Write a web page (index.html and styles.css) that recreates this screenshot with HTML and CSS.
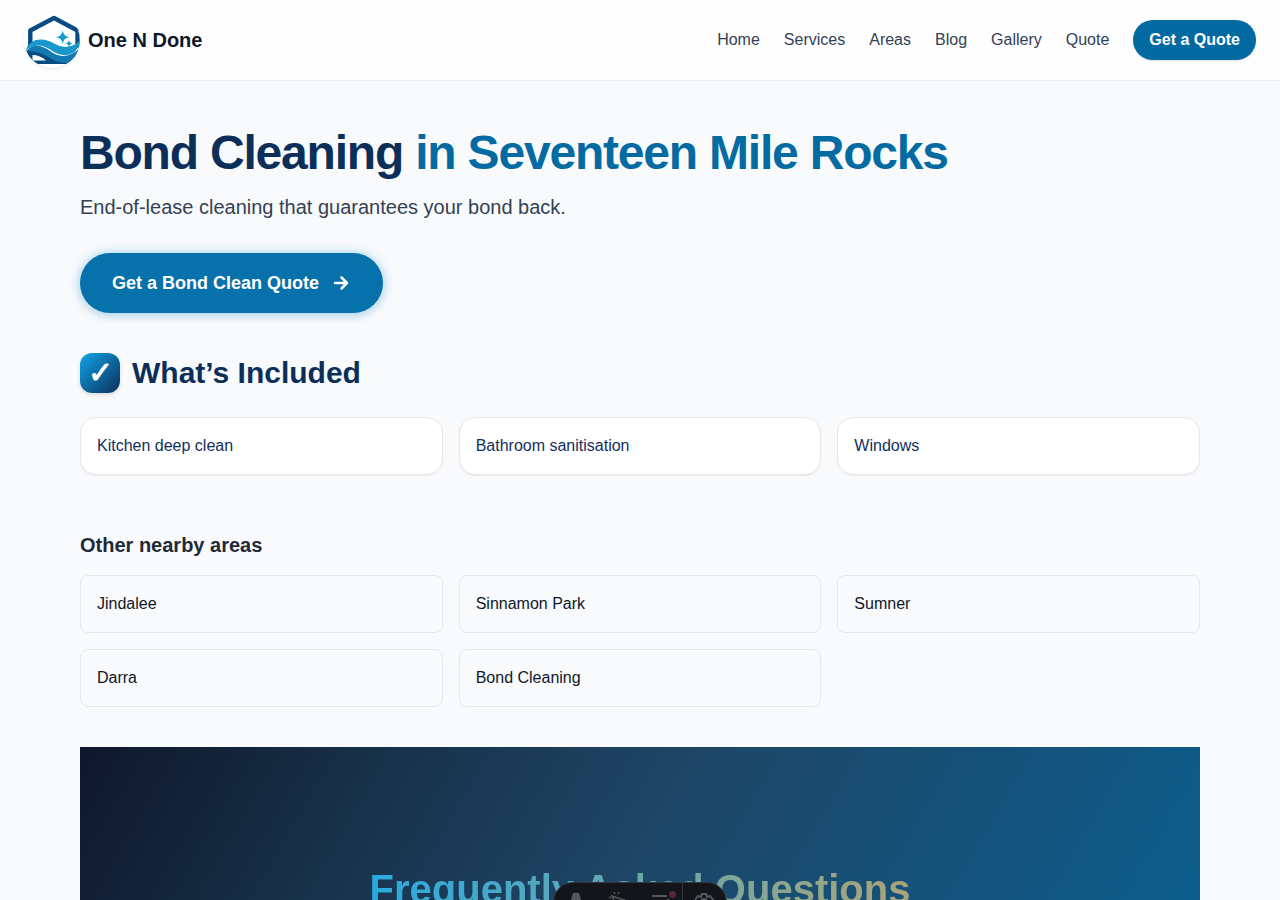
FILE: index.html
```html
<!DOCTYPE html>
<html lang="en">
<head>
<meta charset="utf-8">
<meta name="viewport" content="width=device-width, initial-scale=1">
<title>Bond Cleaning in Seventeen Mile Rocks | One N Done</title>
<link rel="stylesheet" href="styles.css">
</head>
<body>
<header class="site-header">
  <a class="brand" href="#">
    <svg class="brand-logo" viewBox="0 0 56 56" aria-hidden="true">
      <circle cx="28" cy="28" r="28" fill="#fff"/>
      <path d="M6.300 34V18.500L30 6 53.500 18.500V36" fill="none" stroke="#074b82" stroke-width="4.400" stroke-linejoin="round"/>
      <path d="M2 38Q7 34 14 34Q22 36 29 42Q41 50 56 37Q54 47 47 52H11Q5 47 2 38Z" fill="#074b82"/>
      <path d="M8.500 43Q16 43 22 48.500H8.500Z" fill="#fff"/>
      <path d="M2 38Q8 33 16 34Q23 36 29 41Q42 49 56 36Q54 45 48 50Q36 53 26 46Q16 39 2 39Z" fill="#1478b2"/>
      <path d="M2 38Q10 31 17 33Q23 35 29 40Q42 48 56 35" fill="none" stroke="#fff" stroke-width="1.200"/>
      <path d="M2 38Q5 28 16 27.500Q23 27 31 32Q43 39 56 29Q55 37 49 41Q39 46 29 39.500Q18 32 11 34Q6 35 2 38Z" fill="#1997cb"/>
      <path d="M38.700 18.500Q39.500 24 45 25.300Q39.500 26 38.700 32Q38 26 32 25.300Q38 24 38.700 18.500ZM45 28Q45.500 31 48.500 31.500Q45.500 32 45 35Q44.500 32 41.500 31.500Q44.500 31 45 28Z" fill="#159bd2"/>
    </svg>
    <span>One N Done</span>
  </a>
  <nav class="nav" aria-label="Main">
    <a href="#">Home</a>
    <a href="#">Services</a>
    <a href="#">Areas</a>
    <a href="#">Blog</a>
    <a href="#">Gallery</a>
    <a href="#">Quote</a>
    <a class="nav-cta" href="#">Get a Quote</a>
  </nav>
</header>
<main class="content">
  <h1 class="title">Bond Cleaning <span class="title-place">in Seventeen Mile Rocks</span></h1>
  <p class="lead">End-of-lease cleaning that guarantees your bond back.</p>
  <a class="cta" href="#">Get a Bond Clean Quote
    <svg class="cta-arrow" viewBox="0 0 20 20" aria-hidden="true"><path d="M4 10H16M10.500 4.500 16 10 10.500 15.500" fill="none" stroke="currentColor" stroke-width="2.500" stroke-linecap="round" stroke-linejoin="round"/></svg>
  </a>
  <h2 class="included-title"><span class="tick" aria-hidden="true">✓</span>What’s Included</h2>
  <ul class="grid">
    <li class="card included">Kitchen deep clean</li>
    <li class="card included">Bathroom sanitisation</li>
    <li class="card included">Windows</li>
  </ul>
  <h2 class="nearby-title">Other nearby areas</h2>
  <div class="grid">
    <a class="card area" href="#">Jindalee</a>
    <a class="card area" href="#">Sinnamon Park</a>
    <a class="card area" href="#">Sumner</a>
    <a class="card area" href="#">Darra</a>
    <a class="card area" href="#">Bond Cleaning</a>
  </div>
  <section class="faq">
    <h2 class="faq-title">Frequently Asked Questions</h2>
  </section>
</main>
<div class="toolbar" role="toolbar" aria-label="Developer tools">
  <button class="tool" aria-label="Menu"><svg viewBox="0 0 20 20"><path d="M8 1H14L19 17 14 15 13 12H9L8 15 3 17Z" fill="currentColor"/></svg></button>
  <button class="tool" aria-label="Inspect"><svg viewBox="0 0 20 20" fill="none" stroke="currentColor" stroke-width="1.500"><path d="M4 4 19 9 13 12 11 18ZM3 6 1 5M7 2 6 0M10 2 11 0"/></svg></button>
  <button class="tool" aria-label="Audit"><svg viewBox="0 0 20 20" fill="none" stroke="currentColor" stroke-width="2"><path d="M1 4H16M1 10H10M13 12 18 7"/></svg><span class="alert-dot"></span></button>
  <button class="tool tool-settings" aria-label="Settings"><svg viewBox="0 0 20 20" fill="none" stroke="currentColor" stroke-width="2"><path d="M7 2H11L12 5 15 4 18 8 15 11 16 15 12 15 11 18H7L6 15 2 15 3 11 0 8 3 4 6 5Z"/><circle cx="9" cy="10" r="3"/></svg></button>
</div>
</body>
</html>
```
FILE: styles.css
```css
* { box-sizing: border-box; }
body {
  margin: 0;
  background: #f9fafc;
  color: #0f172a;
  font: 16px/24px "Liberation Sans", Arial, sans-serif;
}
a { color: inherit; text-decoration: none; }
h1, h2, p, ul { margin: 0; padding: 0; }
.site-header {
  display: flex;
  align-items: center;
  justify-content: space-between;
  padding: 12px 24px;
  background: #fefefe;
  border-bottom: 1px solid #edf0f5;
}
.brand {
  display: flex;
  align-items: center;
  gap: 8px;
  font-size: 20px;
  line-height: 28px;
  font-weight: 700;
}
.brand-logo {
  width: 56px;
  height: 56px;
  border-radius: 50%;
  box-shadow: 0 1px 3px rgb(0 0 0 / 10%);
}
.nav { display: flex; align-items: center; gap: 24px; color: #334155; }
.nav-cta {
  padding: 8px 16px;
  border-radius: 20px;
  background: #0369a1;
  color: #fff;
  font-weight: 700;
  box-shadow: 0 1px 2px rgb(0 0 0 / 10%);
}
.content { max-width: 1168px; margin: 0 auto; padding: 48px 24px; }
.title {
  margin-bottom: 16px;
  color: #0c2f5a;
  font-size: 48px;
  line-height: 48px;
  letter-spacing: -0.025em;
}
.title-place { color: #036aa2; }
.lead { margin-bottom: 32px; color: #334155; font-size: 20px; line-height: 28px; }
.cta {
  display: inline-flex;
  align-items: center;
  gap: 12px;
  padding: 16px 32px;
  border-radius: 30px;
  background: #0671ab;
  color: #fff;
  font-size: 18px;
  line-height: 28px;
  font-weight: 700;
  box-shadow: 0 0 12px rgb(14 150 220 / 32%), 0 3px 10px rgb(3 105 161 / 14%);
}
.cta-arrow { width: 20px; height: 20px; }
.included-title {
  display: flex;
  align-items: center;
  gap: 12px;
  margin: 40px 0 24px;
  color: #0c2f5a;
  font-size: 30px;
  line-height: 36px;
}
.tick {
  display: flex;
  align-items: center;
  justify-content: center;
  width: 40px;
  height: 40px;
  border-radius: 12px;
  background: linear-gradient(135deg, #0ea5e9, #0c2f5a);
  color: #fff;
  box-shadow: 0 2px 4px rgb(0 0 0 / 12%);
}
.grid {
  display: grid;
  grid-template-columns: repeat(3, minmax(0, 1fr));
  gap: 16px;
  list-style: none;
}
.card { padding: 16px; border: 1px solid #e5e7eb; }
.included {
  border-radius: 16px;
  background: #fff;
  color: #12305e;
  box-shadow: 0 1px 2px rgb(0 0 0 / 6%);
}
.nearby-title { margin: 56px 0 16px; color: #1f2937; font-size: 20px; line-height: 28px; }
.area { border-radius: 8px; border-color: #e2e8f0; }
.faq {
  margin-top: 40px;
  padding: 116px 24px 400px;
  background: linear-gradient(120deg, #0f172a 0%, #17324b 22%, #1e4666 43%, #0369a1 105%);
  text-align: center;
}
.faq-title {
  display: inline-block;
  background: linear-gradient(90deg, #2aaae0, #aaa477);
  background-clip: text;
  -webkit-background-clip: text;
  color: transparent;
  font-size: 40px;
  line-height: 52px;
}
.toolbar {
  position: fixed;
  left: 50%;
  bottom: -22px;
  display: flex;
  width: 174px;
  height: 40px;
  margin-left: -87px;
  overflow: hidden;
  border: 1px solid #343841;
  border-radius: 20px;
  background: #13151a;
}
.tool {
  position: relative;
  display: flex;
  flex: 1;
  align-items: center;
  justify-content: center;
  padding: 0;
  border: 0;
  background: none;
  color: #55575c;
}
.tool svg { width: 20px; height: 20px; }
.tool-settings { border-left: 1px solid #343841; }
.alert-dot {
  position: absolute;
  top: 8px;
  right: 6px;
  width: 7px;
  height: 7px;
  border-radius: 50%;
  background: #5c2439;
}
```
